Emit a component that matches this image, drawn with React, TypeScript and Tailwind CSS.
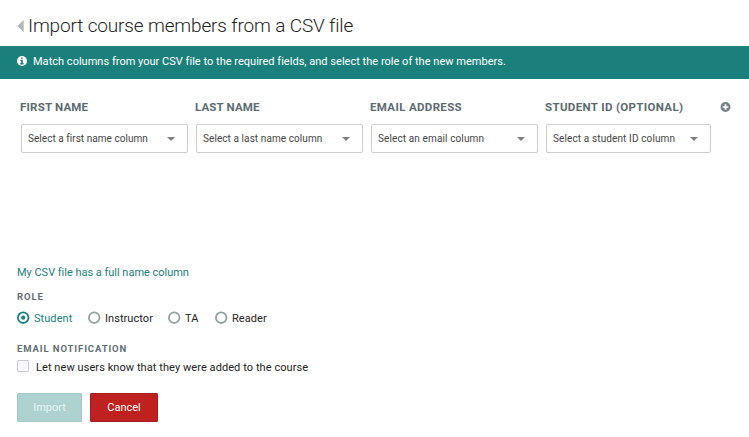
import React from "react";

function Caret() {
  return (
    <svg width="8" height="4" viewBox="0 0 8 4" className="shrink-0" aria-hidden="true">
      <path d="M0 0h8L4 4z" fill="#808080" />
    </svg>
  );
}

type ColumnProps = {
  label: string;
  placeholder: string;
  width: string;
  labelSpacing: string;
  textSpacing: string;
};

function ColumnField({ label, placeholder, width, labelSpacing, textSpacing }: ColumnProps) {
  return (
    <div className={width}>
      <div className={`-ml-px h-4 whitespace-nowrap text-[11.5px] leading-4 font-bold text-[#5a6b71] ${labelSpacing}`}>
        {label}
      </div>
      <button
        type="button"
        className="mt-[9px] flex h-[29px] w-full items-center justify-between rounded-[2px] border border-[#cccccc] bg-white pr-3 pl-[6px]"
      >
        <span className={`whitespace-nowrap text-[10px] leading-4 text-[#444444] ${textSpacing}`}>{placeholder}</span>
        <Caret />
      </button>
    </div>
  );
}

const columns: ColumnProps[] = [
  { label: "FIRST NAME", placeholder: "Select a first name column", width: "w-[167px]", labelSpacing: "tracking-[0.2px]", textSpacing: "tracking-[0.04px]" },
  { label: "LAST NAME", placeholder: "Select a last name column", width: "w-[167px]", labelSpacing: "tracking-[0.15px]", textSpacing: "tracking-[0.08px]" },
  { label: "EMAIL ADDRESS", placeholder: "Select an email column", width: "w-[167px]", labelSpacing: "tracking-[0.35px]", textSpacing: "tracking-[0.12px]" },
  { label: "STUDENT ID (OPTIONAL)", placeholder: "Select a student ID column", width: "w-[165px]", labelSpacing: "tracking-[0.35px]", textSpacing: "tracking-[0.12px]" },
];

const roles = [
  { label: "Student", selected: true, width: "w-[71px]" },
  { label: "Instructor", selected: false, width: "w-[80px]" },
  { label: "TA", selected: false, width: "w-[47px]" },
  { label: "Reader", selected: false, width: "w-[60px]" },
];

function Radio({ selected }: { selected: boolean }) {
  const color = selected ? "#1b807c" : "#93a1a1";
  return (
    <svg width="13" height="13" viewBox="0 0 13 13" className="shrink-0" aria-hidden="true">
      <circle cx="6.2" cy="6.7" r="5.3" fill="white" stroke={color} strokeWidth="1.8" />
      {selected && <circle cx="6.2" cy="6.7" r="2.1" fill={color} />}
    </svg>
  );
}

export default function App() {
  return (
    <main className="h-[437px] w-[749px] overflow-hidden bg-white font-['Roboto','Liberation_Sans',sans-serif] text-[#222222]">
      <header className="flex h-[46px] items-center pt-[6px] pl-[17px]">
        <svg width="7" height="12" viewBox="0 0 7 12" className="mb-px shrink-0" aria-hidden="true">
          <path d="M0.3 6L6.7 0v12z" fill="#b3b8b7" />
        </svg>
        <h1 className="ml-[4px] whitespace-nowrap text-[19px] leading-6 font-light tracking-[-0.15px]">
          Import course members from a CSV file
        </h1>
      </header>
      <div className="flex h-[33px] items-center bg-[#1b807c] pb-[2px] pl-[17px] text-white">
        <svg width="10" height="10" viewBox="0 0 10 10" className="mb-px shrink-0" aria-hidden="true">
          <circle cx="5" cy="5" r="5" fill="white" />
          <path d="M4.1 1.4h1.7v1.4H4.1zM3.3 3.8h2.5v3.3h.8v1.3H3.3V7.1h.8V5h-.8z" fill="#1b807c" />
        </svg>
        <p className="ml-[6px] pt-px whitespace-nowrap text-[11px] leading-4 tracking-[0.02px]">
          Match columns from your CSV file to the required fields, and select the role of the new members.
        </p>
      </div>
      <section className="flex items-start gap-2 pt-5 pl-[21px]">
        {columns.map((column) => (
          <ColumnField key={column.label} {...column} />
        ))}
        <svg width="11" height="10" viewBox="0 0 11 10" className="mt-[3px] ml-px shrink-0" aria-hidden="true">
          <circle cx="5.5" cy="5" r="5" fill="#74838a" />
          <path d="M5.5 2.2v5.6M2.7 5h5.6" stroke="white" strokeWidth="1.7" />
        </svg>
      </section>
      <section className="pt-[112px] pl-[17px]">
        <a className="block w-fit whitespace-nowrap text-[11px] leading-4 tracking-[-0.02px] text-[#1b807c]">
          My CSV file has a full name column
        </a>
        <h2 className="mt-[8px] text-[9.5px] leading-4 font-bold tracking-[0.9px] text-[#5f6e72]">ROLE</h2>
        <div className="mt-[6px] flex h-4">
          {roles.map((role) => (
            <label key={role.label} className={`flex items-start gap-[4px] text-[11px] leading-4 ${role.width} ${role.selected ? "text-[#1b807c]" : ""}`}>
              <Radio selected={role.selected} />
              <span className="whitespace-nowrap tracking-[0.06px]">{role.label}</span>
            </label>
          ))}
        </div>
        <h2 className="mt-[14px] text-[9.5px] leading-4 font-bold tracking-[0.9px] text-[#5f6e72]">EMAIL NOTIFICATION</h2>
        <label className="mt-[3px] flex h-4 items-start">
          <span className="h-3 w-3 rounded-[1px] border border-[#c9ccd6] bg-[#f8f8fc]" />
          <span className="ml-[7px] whitespace-nowrap text-[11px] leading-4 tracking-[0.07px]">Let new users know that they were added to the course</span>
        </label>
        <div className="mt-[17px] flex gap-2">
          <button type="button" className="h-[29px] w-[65px] rounded-[1px] border border-[#a4c9c6] bg-[#add2cf] text-[11px] leading-4 text-[#e6f3f2]">
            Import
          </button>
          <button type="button" className="h-[29px] w-[68px] rounded-[1px] border border-[#a31c1f] bg-[#bf2020] text-[11px] leading-4 text-white">
            Cancel
          </button>
        </div>
      </section>
    </main>
  );
}
